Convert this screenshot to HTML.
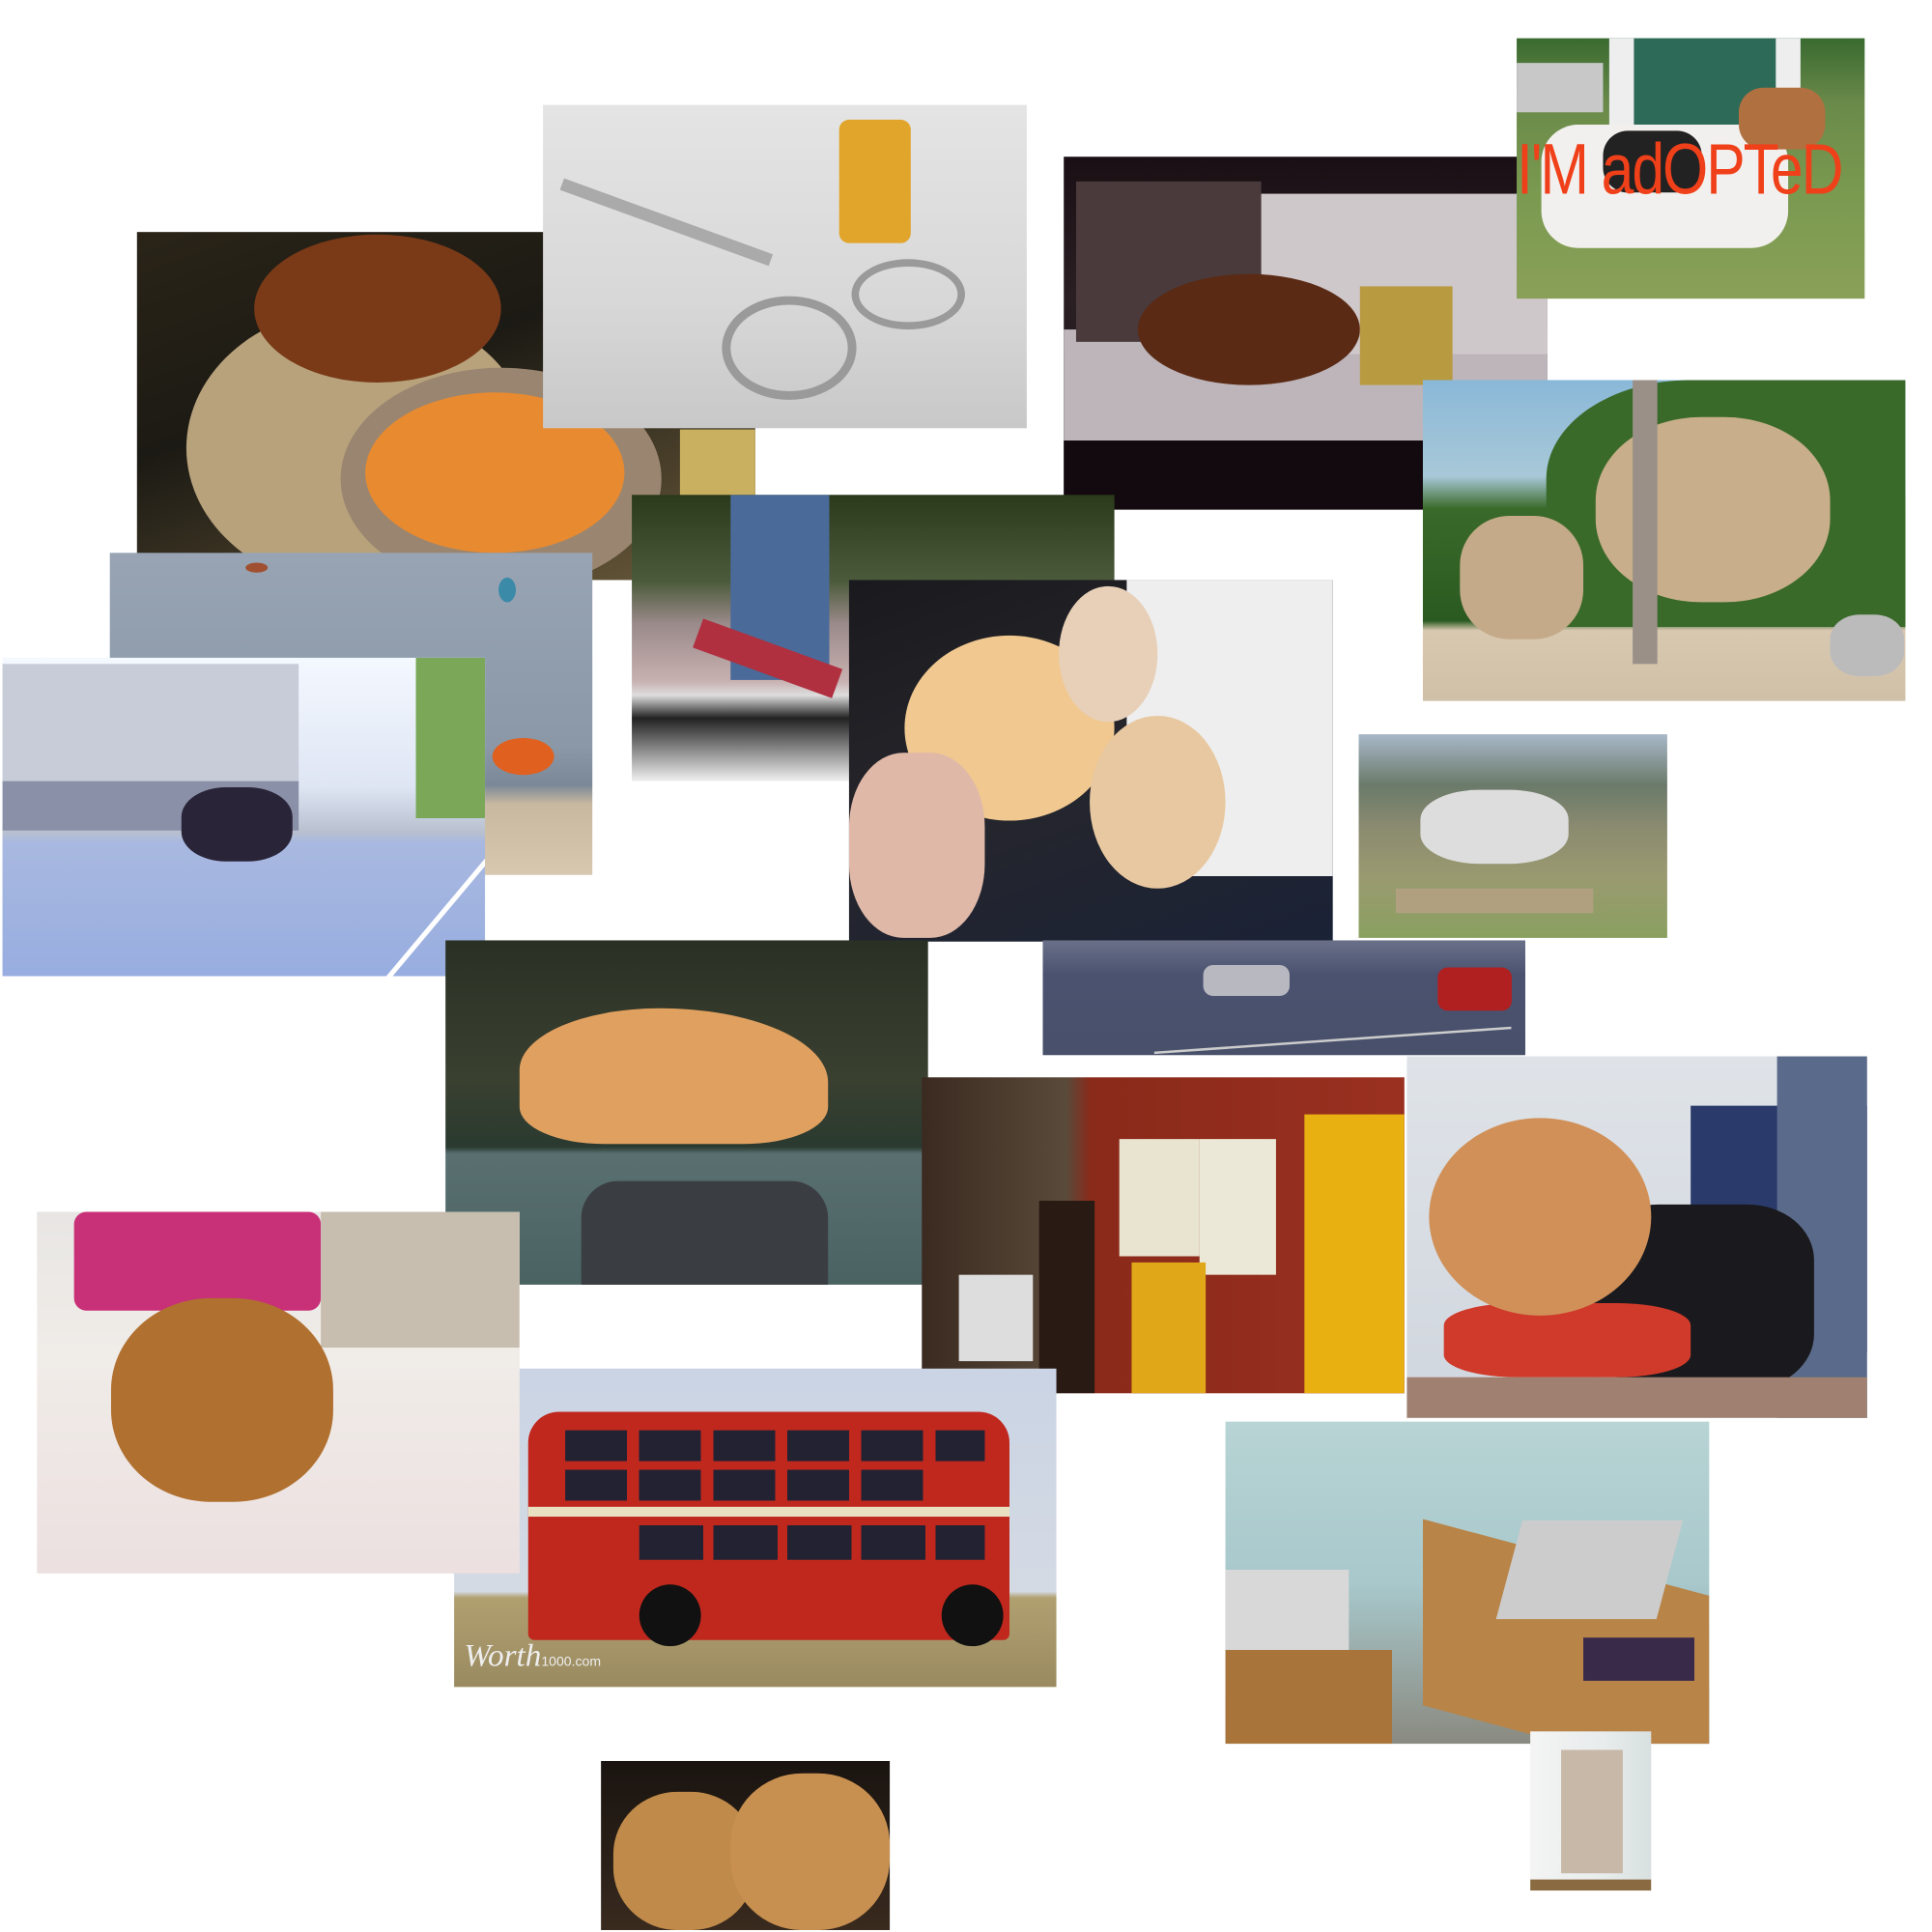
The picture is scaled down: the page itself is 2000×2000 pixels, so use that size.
<!DOCTYPE html>
<html><head><meta charset="utf-8"><style>
html,body{margin:0;padding:0;background:#fff;width:2000px;height:2000px;overflow:hidden}
#c{position:absolute;left:0;top:0;width:1562px;height:1562px;transform:scale(1.2775);transform-origin:0 0}
.p{position:absolute;overflow:hidden}
.p div{position:absolute}
</style></head><body><div id="c">

<!-- food -->
<div class="p" style="left:111px;top:188px;width:501px;height:282px;background:linear-gradient(160deg,#2a2418 0%,#1c1a14 40%,#6a5a3a 100%)">
 <div style="left:40px;top:60px;width:280px;height:230px;border-radius:50%;background:#b8a27c"></div>
 <div style="left:95px;top:2px;width:200px;height:120px;border-radius:50%;background:#7a3a18"></div>
 <div style="left:165px;top:110px;width:260px;height:180px;border-radius:50%;background:#9a8670"></div>
 <div style="left:185px;top:130px;width:210px;height:130px;border-radius:50%;background:#e88a30"></div>
 <div style="left:440px;top:160px;width:61px;height:122px;background:#c9b060"></div>
</div>
<!-- scissors -->
<div class="p" style="left:440px;top:85px;width:392px;height:262px;background:linear-gradient(180deg,#e4e4e4,#d8d8d8 60%,#c8c8c8)">
 <div style="left:240px;top:12px;width:58px;height:100px;background:#e0a52a;border-radius:8px"></div>
 <div style="left:145px;top:155px;width:95px;height:70px;border:7px solid #9a9a9a;border-radius:50%"></div>
 <div style="left:250px;top:125px;width:80px;height:45px;border:6px solid #9a9a9a;border-radius:50%"></div>
 <div style="left:10px;top:90px;width:180px;height:10px;background:#aaa;transform:rotate(20deg)"></div>
</div>
<!-- dog couch -->
<div class="p" style="left:862px;top:127px;width:392px;height:286px;background:linear-gradient(180deg,#1a0f14,#2a2024 40%,#1a1216)">
 <div style="left:0;top:140px;width:392px;height:90px;background:#bdb5ba"></div>
 <div style="left:150px;top:30px;width:242px;height:130px;background:#cfc8cb"></div>
 <div style="left:10px;top:20px;width:150px;height:130px;background:#4a3a3c"></div>
 <div style="left:60px;top:95px;width:180px;height:90px;border-radius:50%;background:#5a2a14"></div>
 <div style="left:240px;top:105px;width:75px;height:80px;background:#b89a40"></div>
 <div style="left:0;top:230px;width:392px;height:56px;background:#120a0e"></div>
</div>
<!-- adopted -->
<div class="p" style="left:1229px;top:31px;width:282px;height:211px;background:linear-gradient(180deg,#3a6a30 0%,#6a8a4a 25%,#7a9a50 60%,#8aa058)">
 <div style="left:0;top:20px;width:70px;height:40px;background:#c8c8c8"></div>
 <div style="left:75px;top:0;width:115px;height:80px;background:#2e6a58;border-left:20px solid #eee;border-right:20px solid #eee"></div>
 <div style="left:20px;top:70px;width:200px;height:100px;background:#f2f0ee;border-radius:30px"></div>
 <div style="left:70px;top:75px;width:80px;height:50px;background:#222;border-radius:20px"></div>
 <div style="left:180px;top:40px;width:70px;height:50px;background:#b07040;border-radius:20px"></div>
 <div style="left:0;top:72px;width:282px;font:58px/70px 'Liberation Sans Narrow','Liberation Sans',sans-serif;color:#f0401a;letter-spacing:-2px;white-space:nowrap;transform:scaleX(0.82);transform-origin:0 0">I'M adOPTeD</div>
</div>
<!-- zoo elephants -->
<div class="p" style="left:1153px;top:308px;width:391px;height:260px;background:linear-gradient(180deg,#8ab8d8,#a8c8d8 30%,#3a6a2a 40%,#2a5a20 75%,#d8c8b0 78%,#d0c0a8)">
 <div style="left:100px;top:0;width:291px;height:200px;background:#3a6a2a;border-radius:40% 0 0 0"></div>
 <div style="left:140px;top:30px;width:190px;height:150px;background:#c8ae8a;border-radius:45%"></div>
 <div style="left:30px;top:110px;width:100px;height:100px;background:#c4aa88;border-radius:40%"></div>
 <div style="left:170px;top:0;width:20px;height:230px;background:#9a9088"></div>
 <div style="left:330px;top:190px;width:60px;height:50px;background:#bbb;border-radius:40%"></div>
</div>
<!-- skate -->
<div class="p" style="left:512px;top:401px;width:391px;height:232px;background:linear-gradient(180deg,#2a3a1a,#4a5a3a 30%,#9a8a8a 45%,#c8b0b0 65%,#ddd 70%,#222 78%,#f0f0f0 100%)">
 <div style="left:80px;top:0;width:80px;height:150px;background:#4a6a9a"></div>
 <div style="left:50px;top:120px;width:120px;height:25px;background:#b03040;transform:rotate(20deg)"></div>
</div>
<!-- kites -->
<div class="p" style="left:89px;top:448px;width:391px;height:261px;background:linear-gradient(180deg,#98a4b4,#8a98a8 60%,#7a8898 72%,#c8b8a0 78%,#d8c8b0)">
 <div style="left:310px;top:150px;width:50px;height:30px;background:#e06020;border-radius:50%"></div>
 <div style="left:110px;top:8px;width:18px;height:8px;background:#a05030;border-radius:50%"></div>
 <div style="left:315px;top:20px;width:14px;height:20px;background:#3a8aa8;border-radius:50%"></div>
</div>
<!-- street -->
<div class="p" style="left:2px;top:533px;width:391px;height:258px;background:linear-gradient(180deg,#f4f8ff,#dfe6f4 40%,#b8c0d0 55%,#a8b8e0 58%,#98aee0 100%)">
 <div style="left:0;top:5px;width:240px;height:130px;background:#c8ccd8"></div>
 <div style="left:0;top:100px;width:240px;height:40px;background:#8a90a8"></div>
 <div style="left:145px;top:105px;width:90px;height:60px;background:#2a2438;border-radius:40%"></div>
 <div style="left:335px;top:0;width:56px;height:130px;background:#7aa858"></div>
 <div style="left:250px;top:140px;width:160px;height:4px;background:#fff;transform:rotate(-50deg);transform-origin:100% 0"></div>
</div>
<!-- donut -->
<div class="p" style="left:688px;top:470px;width:392px;height:293px;background:linear-gradient(160deg,#1a1a1e,#26262c 50%,#1a2236)">
 <div style="left:225px;top:0;width:167px;height:240px;background:#eeeeee;border-radius:0 0 0 40px"></div>
 <div style="left:45px;top:45px;width:170px;height:150px;border-radius:50%;background:#f0c890"></div>
 <div style="left:195px;top:110px;width:110px;height:140px;border-radius:50%;background:#e8c8a0"></div>
 <div style="left:170px;top:5px;width:80px;height:110px;border-radius:50%;background:#e8d0b8"></div>
 <div style="left:0;top:140px;width:110px;height:150px;background:#e0b8a8;border-radius:40%"></div>
</div>
<!-- horse -->
<div class="p" style="left:1101px;top:595px;width:250px;height:165px;background:linear-gradient(180deg,#a8b8c8,#6a7a6a 25%,#8a8a70 45%,#9a9a70 70%,#8aa060)">
 <div style="left:50px;top:45px;width:120px;height:60px;background:#ddd;border-radius:40%"></div>
 <div style="left:30px;top:125px;width:160px;height:20px;background:#b0a080"></div>
</div>
<!-- parking -->
<div class="p" style="left:845px;top:762px;width:391px;height:93px;background:linear-gradient(180deg,#6a7088,#4a5270 30%,#48506a)">
 <div style="left:130px;top:20px;width:70px;height:25px;background:#b8b8c0;border-radius:8px"></div>
 <div style="left:320px;top:22px;width:60px;height:35px;background:#b02020;border-radius:8px"></div>
 <div style="left:90px;top:80px;width:290px;height:2px;background:#ccc;transform:rotate(-4deg)"></div>
</div>
<!-- cat on car -->
<div class="p" style="left:361px;top:762px;width:391px;height:279px;background:linear-gradient(180deg,#2a3024,#3a4030 40%,#2a3a30 60%,#5a7070 62%,#4a6262)">
 <div style="left:60px;top:55px;width:250px;height:110px;border-radius:50% 60% 30% 30%;background:#e0a060"></div>
 <div style="left:110px;top:195px;width:200px;height:90px;background:#3a3e42;border-radius:30px 30px 0 0"></div>
</div>
<!-- fridge room -->
<div class="p" style="left:747px;top:873px;width:391px;height:256px;background:linear-gradient(90deg,#3a2a20,#5a4a3a 30%,#8a2a1a 35%,#9a3020 100%)">
 <div style="left:310px;top:30px;width:81px;height:226px;background:#e8b010"></div>
 <div style="left:160px;top:50px;width:65px;height:95px;background:#e8e4d0"></div>
 <div style="left:225px;top:50px;width:62px;height:110px;background:#ece8d8"></div>
 <div style="left:170px;top:150px;width:60px;height:106px;background:#e0a818"></div>
 <div style="left:95px;top:100px;width:45px;height:156px;background:#2a1a14"></div>
 <div style="left:30px;top:160px;width:60px;height:70px;background:#ddd"></div>
</div>
<!-- cat bag -->
<div class="p" style="left:1140px;top:856px;width:373px;height:293px;background:linear-gradient(180deg,#dfe3e8,#d0d6de)">
 <div style="left:230px;top:40px;width:143px;height:200px;background:#2a3a6a"></div>
 <div style="left:300px;top:0;width:73px;height:293px;background:#5a6a8a"></div>
 <div style="left:150px;top:120px;width:180px;height:150px;background:#1a1a1e;border-radius:30%"></div>
 <div style="left:30px;top:200px;width:200px;height:60px;background:#d03a2a;border-radius:30%"></div>
 <div style="left:18px;top:50px;width:180px;height:160px;border-radius:50%;background:#d09058"></div>
 <div style="left:0;top:260px;width:373px;height:33px;background:#a08070"></div>
</div>
<!-- bus -->
<div class="p" style="left:368px;top:1109px;width:488px;height:258px;background:linear-gradient(180deg,#cad4e4,#d4dae4 70%,#b0a070 72%,#9a8a60)">
 <div style="left:60px;top:35px;width:390px;height:185px;background:#c0281e;border-radius:25px 25px 5px 5px"></div>
 <div style="left:90px;top:50px;width:340px;height:25px;background:repeating-linear-gradient(90deg,#223 0 50px,#c0281e 50px 60px)"></div>
 <div style="left:90px;top:82px;width:290px;height:25px;background:repeating-linear-gradient(90deg,#223 0 50px,#c0281e 50px 60px)"></div>
 <div style="left:60px;top:112px;width:390px;height:8px;background:#e8e0c0"></div>
 <div style="left:150px;top:127px;width:280px;height:28px;background:repeating-linear-gradient(90deg,#223 0 52px,#c0281e 52px 60px)"></div>
 <div style="left:150px;top:175px;width:50px;height:50px;border-radius:50%;background:#111"></div>
 <div style="left:395px;top:175px;width:50px;height:50px;border-radius:50%;background:#111"></div>
 <div style="left:8px;top:218px;font:italic 26px 'Liberation Serif',serif;color:#eee">Worth<span style="font:11px 'Liberation Sans',sans-serif">1000.com</span></div>
</div>
<!-- cat bed -->
<div class="p" style="left:30px;top:982px;width:391px;height:293px;background:linear-gradient(180deg,#e8e6e4,#f0ece8 40%,#ece0e0)">
 <div style="left:30px;top:0;width:200px;height:80px;background:#c83078;border-radius:10px"></div>
 <div style="left:230px;top:0;width:161px;height:110px;background:#c8beb0"></div>
 <div style="left:60px;top:70px;width:180px;height:165px;border-radius:45%;background:#b07030"></div>
</div>
<!-- office -->
<div class="p" style="left:993px;top:1152px;width:392px;height:261px;background:linear-gradient(180deg,#b8d4d4,#a8c8cc 50%,#8a8a80)">
 <div style="left:0;top:120px;width:100px;height:65px;background:#d8d8d8"></div>
 <div style="left:0;top:185px;width:135px;height:76px;background:#a8743a"></div>
 <div style="left:160px;top:110px;width:232px;height:151px;background:#b88448;transform:skewY(15deg)"></div>
 <div style="left:230px;top:80px;width:130px;height:80px;background:#ccc;transform:skewX(-15deg)"></div>
 <div style="left:290px;top:175px;width:90px;height:35px;background:#3a2a4a"></div>
</div>
<!-- baby fridge -->
<div class="p" style="left:1240px;top:1403px;width:98px;height:129px;background:linear-gradient(90deg,#f4f4f4,#e8ecec 60%,#d8e0e0)">
 <div style="left:25px;top:15px;width:50px;height:100px;background:#c8b8a8"></div>
 <div style="left:0;top:120px;width:98px;height:9px;background:#8a6a40"></div>
</div>
<!-- dogs -->
<div class="p" style="left:487px;top:1427px;width:234px;height:137px;background:linear-gradient(180deg,#1a1410,#2a2018 60%,#3a2a1e)">
 <div style="left:10px;top:25px;width:115px;height:112px;border-radius:45%;background:#c08a4a"></div>
 <div style="left:105px;top:10px;width:129px;height:127px;border-radius:45%;background:#c89050"></div>
</div>

</div></body></html>
